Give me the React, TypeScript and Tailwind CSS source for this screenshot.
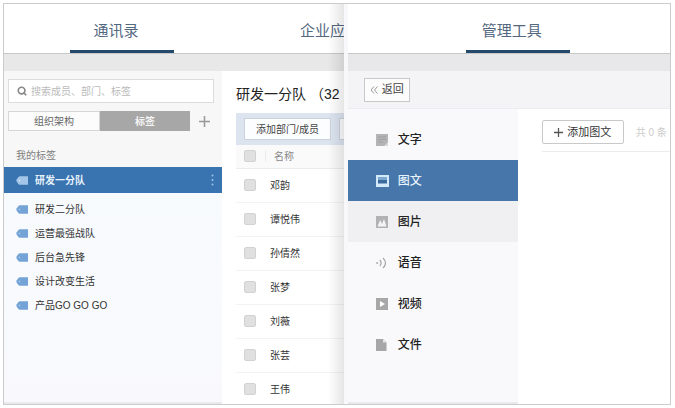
import React from 'react'
import { Search } from 'lucide-react'

const TAGS = ['研发一分队', '研发二分队', '运营最强战队', '后台急先锋', '设计改变生活', '产品GO GO GO']
const MEMBERS = ['邓韵', '谭悦伟', '孙倩然', '张梦', '刘薇', '张芸', '王伟']

const TagIcon = ({ active }: { active: boolean }): React.JSX.Element => (
  <svg width="12" height="9" viewBox="0 0 12 9" className="shrink-0">
    <path d="M3.5 0.3H12V8.7H3.5Q2.4 8.5 0.6 5.4Q0.2 4.5 0.6 3.6Q2.4 0.5 3.5 0.3Z" fill={active ? '#a3c6e8' : '#74a3d6'} />
    <circle cx="3.4" cy="4.5" r="0.8" fill={active ? '#d9eafa' : '#b5d1ef'} />
  </svg>
)

const PlusIcon = ({ size, color }: { size: number; color: string }): React.JSX.Element => (
  <svg width={size} height={size} viewBox="0 0 10 10" stroke={color} strokeWidth="1.4" className="shrink-0">
    <path d="M5 0V10M0 5H10" />
  </svg>
)

const MATERIALS = [
  {
    name: '文字',
    icon: (
      <>
        <path d="M0 0H12V12H0Z" fill="#b4b4b6" />
        <path d="M2 3H10M2 5.5H10M2 8H7" stroke="#a0a0a2" />
        <path d="M8 12L12 8V12Z" fill="#d8d8da" />
      </>
    ),
  },
  {
    name: '图文',
    icon: (
      <>
        <path d="M0 0H13V12H0Z" fill="#d4eafa" />
        <path d="M2 2H11V5H2Z" fill="#7ea9cf" />
        <path d="M2 5H11V8.5H2Z" fill="#3a6a9e" />
      </>
    ),
  },
  {
    name: '图片',
    icon: (
      <>
        <rect width="12" height="12" fill="#b2b2b4" />
        <path d="M1.5 10.5L4.2 4L6 8L8 3L10.5 10.5Z" fill="#f4f4f4" />
      </>
    ),
  },
  {
    name: '语音',
    icon: (
      <>
        <circle cx="1.2" cy="6" r="1.1" fill="#b0b0b0" />
        <path d="M3.8 3Q6.4 6 3.8 9M7 0.8Q12 6 7 11.2" fill="none" stroke="#a4a4a4" strokeWidth="1.2" />
      </>
    ),
  },
  {
    name: '视频',
    icon: (
      <>
        <rect width="12" height="12" fill="#a8a8a8" />
        <path d="M4 3L9 6L4 9Z" fill="#fff" />
      </>
    ),
  },
  {
    name: '文件',
    icon: (
      <>
        <path d="M0 0H7L10.5 3.5V12H0Z" fill="#a6a6a8" />
        <path d="M7 0V3.5H10.5Z" fill="#e4e4e4" />
      </>
    ),
  },
]

const NavTab = ({ label, active }: { label: string; active?: boolean }): React.JSX.Element => (
  <a
    href="#"
    className={`flex w-26 shrink-0 items-center justify-center border-b-[3px] pt-2 text-[15px] text-[#53687f] ${
      active ? 'border-[#24496b] pr-3' : 'border-transparent'
    }`}
  >
    {label}
  </a>
)

const CheckBox = ({ label }: { label: string }): React.JSX.Element => (
  <input
    type="checkbox"
    aria-label={label}
    className="block size-3 appearance-none rounded-xs border border-[#d2d2d2] bg-[#e0e0e0] checked:bg-[#3a74b0]"
  />
)

const TagSidebar = (): React.JSX.Element => (
  <aside className="flex w-[218px] shrink-0 flex-col border-b-2 border-[#e9e9ec] bg-linear-to-b from-[#f6fbfe] to-[#f9f9fd]">
    <div className="bg-[#f7f7f7] pt-2">
      <label className="mr-2 ml-1 flex h-6 items-center gap-1 border border-[#dcdcdc] bg-white px-2 text-[#888]">
        <Search size={10} strokeWidth={4} className="shrink-0" />
        <input
          type="search"
          aria-label="搜索"
          placeholder="搜索成员、部门、标签"
          className="min-w-0 flex-1 text-[10px] outline-none placeholder:text-[#bbb]"
        />
      </label>
      <div className="mt-2 mr-2 ml-1 flex items-center">
        <div className="flex h-5 flex-1 text-[10px]">
          <button className="flex-1 border border-[#d6d6d6] bg-[#fcfcfc] text-[#666]">组织架构</button>
          <button className="flex-1 bg-[#a7a7a7] font-bold text-[#f4f4f4]">标签</button>
        </div>
        <button aria-label="添加标签" className="flex w-6 justify-end pr-1">
          <PlusIcon size={11} color="#999" />
        </button>
      </div>
      <h2 className="flex h-9 items-end pb-1 pl-3 text-[10px] text-[#808080]">我的标签</h2>
    </div>
    <ul className="text-[10px] text-[#333]">
      {TAGS.map((tag, i) => (
        <li key={tag} className={i === 0 ? 'mb-1 bg-[#3a74b0] font-bold text-[#e6f1fb]' : ''}>
          <a href="#" className={`flex items-center gap-[7px] pr-2 pl-3 ${i === 0 ? 'h-[26px]' : 'h-6'}`}>
            <TagIcon active={i === 0} />
            <span className="flex-1">{tag}</span>
            {i === 0 && (
              <svg width="3" height="12" viewBox="0 0 3 12" fill="#9cc4ea">
                <circle cx="1.5" cy="1.5" r="1" />
                <circle cx="1.5" cy="6" r="1" />
                <circle cx="1.5" cy="10.5" r="1" />
              </svg>
            )}
          </a>
        </li>
      ))}
    </ul>
  </aside>
)

const MemberList = (): React.JSX.Element => (
  <main className="min-w-0 flex-1 overflow-hidden pl-3.5 whitespace-nowrap">
    <h1 className="flex h-[42px] items-center pt-1 text-[14px] text-[#222]">研发一分队 （32</h1>
    <div className="flex h-8 items-center gap-2 bg-[#dce4f0] pl-2 text-[10px] text-[#444]">
      <button className="h-[22px] w-[87px] shrink-0 border border-[#ccd2dc] bg-[#fcfdfe]">添加部门/成员</button>
      <button aria-label="更多" className="h-[22px] w-[87px] shrink-0 border border-[#ccd2dc] bg-[#fcfdfe]" />
    </div>
    <table className="w-full border-collapse text-left text-[10px] text-[#333]">
      <thead className="bg-[#fafafb] text-[#888]">
        <tr className="h-[23px] border-b border-[#ececec]">
          <th className="w-[38px] pl-2">
            <div className="mr-2 border-r border-[#ececec]"><CheckBox label="全选" /></div>
          </th>
          <th className="font-normal">名称</th>
        </tr>
      </thead>
      <tbody>
        {MEMBERS.map((name) => (
          <tr key={name} className="h-[34px] border-b border-[#f3f3f3]">
            <td className="pl-2"><CheckBox label={name} /></td>
            <td className="pr-2"><span className="-ml-1">{name}</span></td>
          </tr>
        ))}
      </tbody>
    </table>
  </main>
)

const ContactsWindow = (): React.JSX.Element => (
  <section className="relative flex w-[51%] shrink-0 flex-col overflow-hidden">
    <nav className="flex h-[50px] shrink-0 gap-[104px] border-b border-[#c8c8c8] pl-[66px]">
      <NavTab label="通讯录" active />
      <NavTab label="企业应用" />
    </nav>
    <div className="h-[17px] shrink-0 bg-[#e8e8e8]" />
    <div className="flex min-h-0 flex-1">
      <TagSidebar />
      <MemberList />
    </div>
    <div className="pointer-events-none absolute inset-y-0 right-0 w-4 bg-linear-to-r from-transparent to-black/10" />
  </section>
)

const ToolsWindow = (): React.JSX.Element => (
  <section className="flex min-w-0 flex-1 flex-col overflow-hidden border-l-4 border-[#f8f8fa]">
    <nav className="flex h-[50px] shrink-0 border-b border-[#c8c8c8] pl-[118px]">
      <NavTab label="管理工具" active />
    </nav>
    <div className="h-[17px] shrink-0 bg-[#e8e8ea]" />
    <div className="flex h-[38px] shrink-0 items-center border-b border-[#ececf0] bg-[#f4f4f6] pl-4">
      <button className="flex h-6 items-center gap-1 border border-[#c9c9c9] bg-[#fcfcfc] px-[5px] text-[11px] text-[#444]">
        <svg width="8" height="8" viewBox="0 0 8 8" fill="none" stroke="#999">
          <path d="M4 0.5L1 4L4 7.5M7.5 0.5L4.5 4L7.5 7.5" />
        </svg>
        返回
      </button>
    </div>
    <div className="flex min-h-0 flex-1">
      <ul className="w-[170px] shrink-0 border-b-2 border-[#e9e9ec] bg-[#f9f9fc] pt-2.5 text-[12px] text-[#222]">
        {MATERIALS.map(({ name, icon }) => (
          <li
            key={name}
            className={name === '图文' ? 'bg-[#4676aa] text-[#e6f2fc]' : name === '图片' ? 'bg-[#f0f0f2]' : ''}
          >
            <a href="#" className="flex h-[41px] items-center gap-2 pl-7 font-medium">
              <svg width="14" height="12" viewBox="0 0 14 12" className="shrink-0">{icon}</svg>
              {name}
            </a>
          </li>
        ))}
      </ul>
      <main className="min-w-0 flex-1 overflow-hidden pt-2 pl-6 whitespace-nowrap">
        <div className="flex h-[35px] items-center gap-3 border-b border-[#ececf0] pb-1">
          <button className="flex h-6 w-[82px] shrink-0 items-center justify-center gap-1 rounded-xs border border-[#c9c9c9] bg-white text-[11px] text-[#333]">
            <PlusIcon size={9} color="#555" />
            添加图文
          </button>
          <span className="text-[10px] text-[#ccc]">共 0 条</span>
        </div>
      </main>
    </div>
  </section>
)

const App = (): React.JSX.Element => (
  <div className="h-screen bg-white py-[3px] pr-1 pl-[3px] font-['Liberation_Sans','Noto_Sans_CJK_SC',sans-serif]">
    <div className="flex h-full overflow-hidden border border-[#ccc] bg-white">
      <ContactsWindow />
      <ToolsWindow />
    </div>
  </div>
)

export default App
